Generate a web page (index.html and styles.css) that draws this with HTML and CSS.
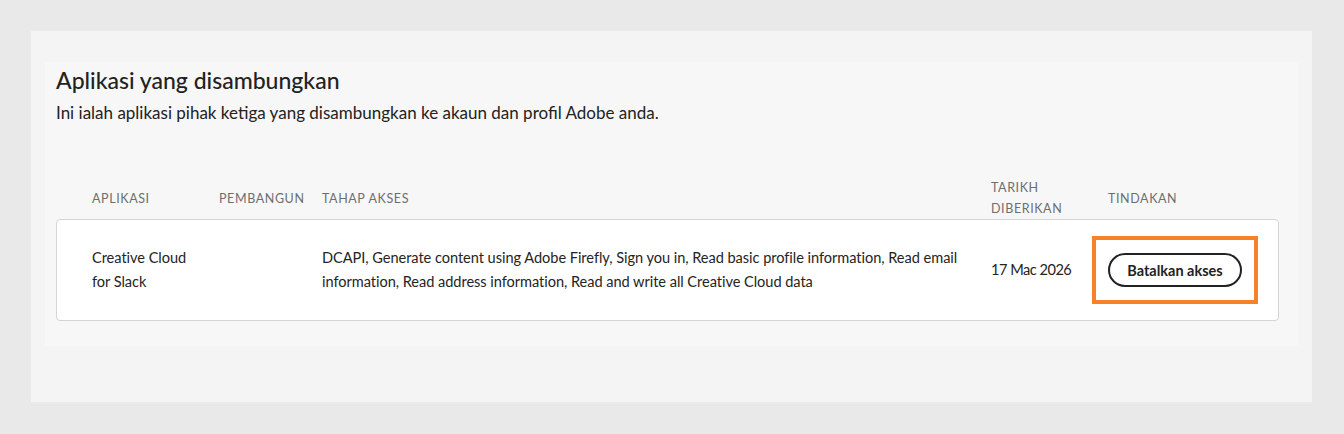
FILE: index.html
```html
<!DOCTYPE html>
<html lang="ms">
<head>
<meta charset="utf-8">
<title>Aplikasi yang disambungkan</title>
<link rel="stylesheet" href="styles.css">
</head>
<body>
<div class="outer">
  <section class="panel">
    <h1 class="title">Aplikasi yang disambungkan</h1>
    <p class="subtitle">Ini ialah aplikasi pihak ketiga yang disambungkan ke akaun dan profil Adobe anda.</p>
    <div class="table">
      <div class="head">
        <div class="th">Aplikasi</div>
        <div class="th">Pembangun</div>
        <div class="th">Tahap akses</div>
        <div class="th">Tarikh diberikan</div>
        <div class="th">Tindakan</div>
      </div>
      <div class="row">
        <div class="td">Creative Cloud for Slack</div>
        <div class="td"></div>
        <div class="td">DCAPI, Generate content using Adobe Firefly, Sign you in, Read basic profile information, Read email information, Read address information, Read and write all Creative Cloud data</div>
        <div class="td">17 Mac 2026</div>
        <div class="td action">
          <span class="highlight"><button class="btn">Batalkan akses</button></span>
        </div>
      </div>
    </div>
  </section>
</div>
</body>
</html>
```
FILE: styles.css
```css
* { box-sizing: border-box; }
html, body { margin: 0; padding: 0; }
body {
  background: #e9e9e9;
  font-family: Lato, "Liberation Sans", sans-serif;
  color: #2c2c2c;
  width: 1344px;
  height: 434px;
  padding: 31px 32px 0 31px;
}
.outer {
  background: #f4f4f4;
  height: 371px;
  padding: 31px 14px 0 14px;
}
.panel {
  background: #f7f7f7;
  height: 284px;
  padding: 4px 19px 0 11px;
}
.title {
  margin: 0;
  font-size: 23px;
  font-weight: 500;
  line-height: 28px;
  color: #222;
}
.subtitle {
  margin: 8px 0 0 0;
  font-size: 17px;
  line-height: 22px;
  color: #222;
}
.table { margin-top: 53px; }
.head, .row {
  display: grid;
  grid-template-columns: 127px 103px 669px 117px minmax(0, 1fr);
  padding: 0 36px;
}
.head {
  align-items: center;
  height: 42px;
}
.th {
  font-size: 12.5px;
  letter-spacing: 0.6px;
  text-transform: uppercase;
  color: #6e6e6e;
  line-height: 21px;
}
.th:nth-child(4) { width: 90px; }
.row {
  background: #fff;
  border: 1px solid #d5d5d5;
  border-radius: 4px;
  height: 102px;
  align-items: center;
  padding: 0 35px;
}
.td {
  font-size: 14.6px;
  letter-spacing: -0.05px;
  line-height: 24px;
  color: #242424;
}
.td:first-child { width: 110px; }
.td:nth-child(3) { padding-right: 22px; }
.td:nth-child(4) { letter-spacing: -0.5px; }
.action { white-space: nowrap; }
.highlight {
  display: inline-block;
  border: 4px solid #f5822a;
  padding: 13px 12px;
  margin-left: -16px;
}
.btn {
  display: block;
  font-family: inherit;
  font-size: 14.5px;
  font-weight: 700;
  color: #222;
  background: #fff;
  border: 2px solid #222;
  border-radius: 17px;
  width: 134px;
  height: 34px;
  padding: 0;
  white-space: nowrap;
  cursor: pointer;
}
```
